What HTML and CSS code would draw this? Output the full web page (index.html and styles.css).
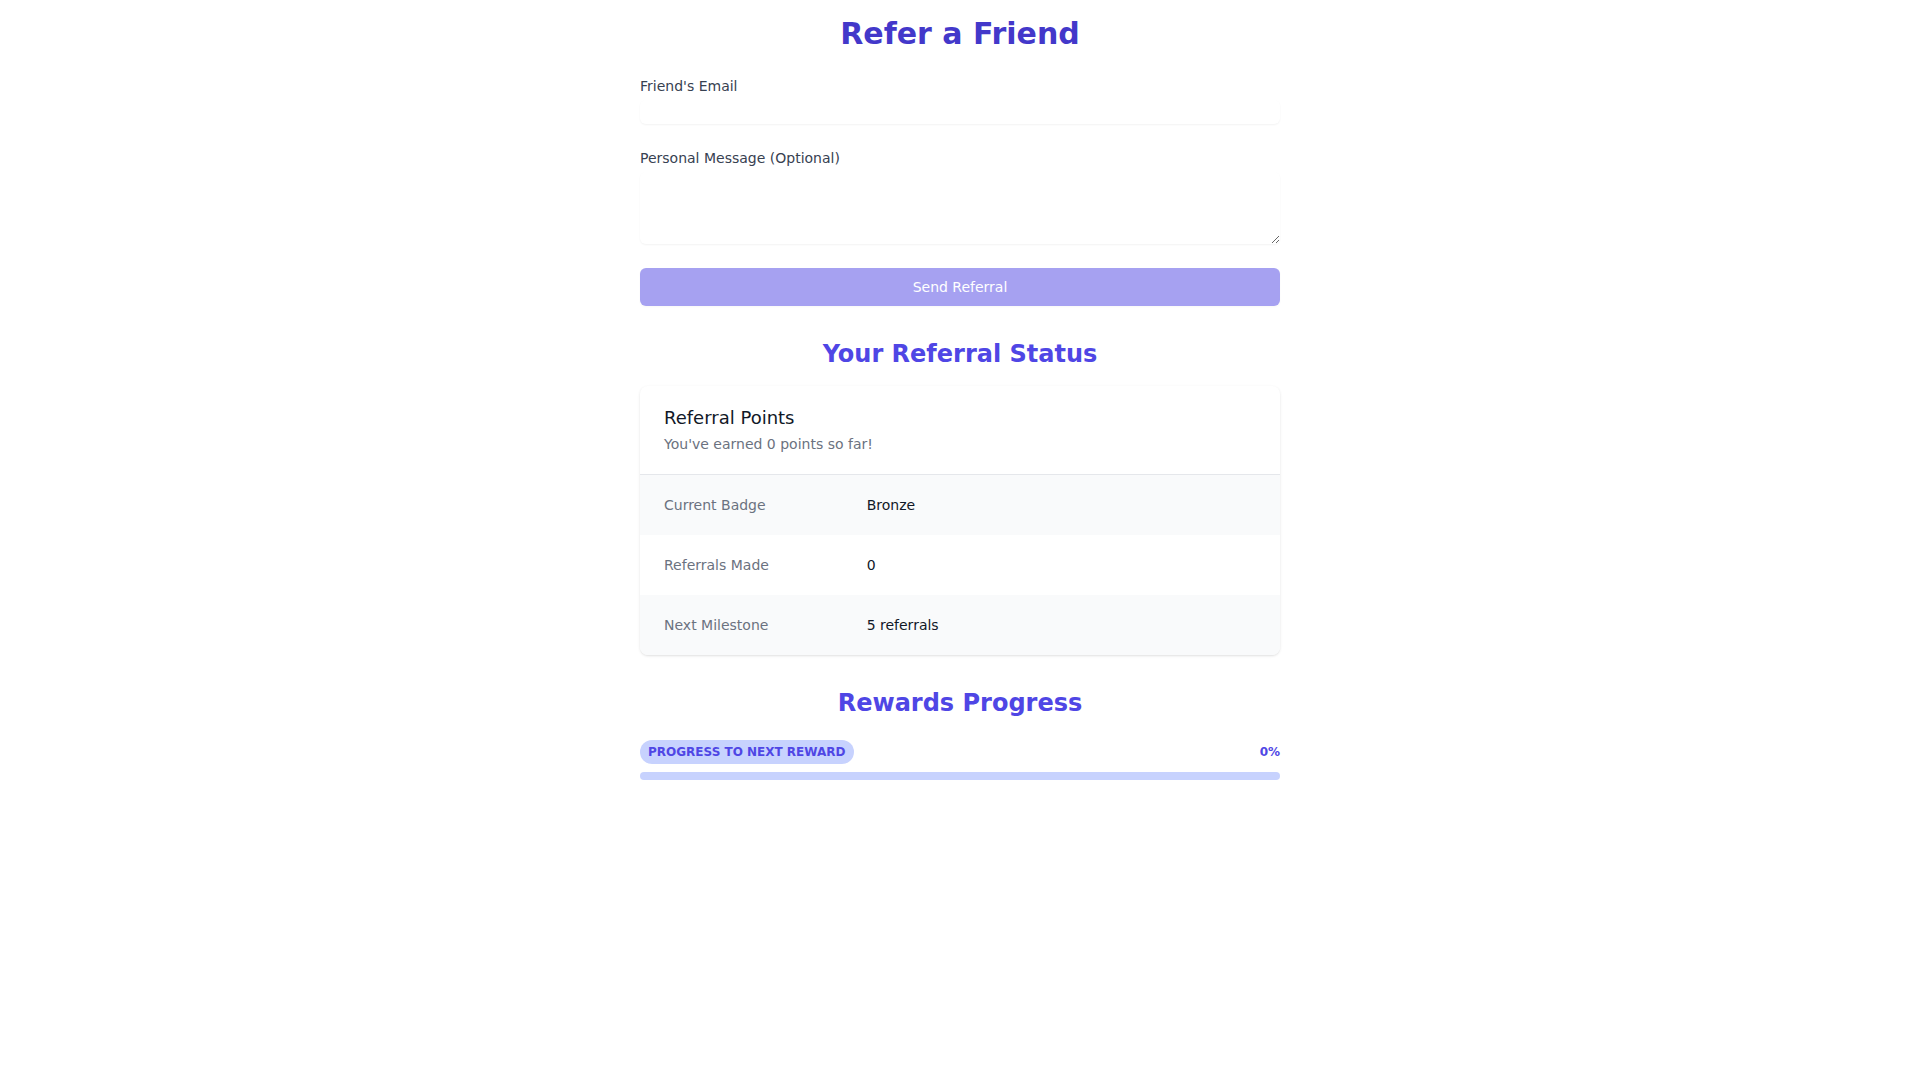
FILE: index.html
```html
<!DOCTYPE html>
<html lang="en">
<head>
<meta charset="utf-8">
<title>Refer a Friend</title>
<link rel="stylesheet" href="styles.css">
</head>
<body>
<div class="page">
  <h1 class="title">Refer a Friend</h1>
  <form class="form">
    <div class="field">
      <label class="label" for="email">Friend's Email</label>
      <input class="input" id="email" type="email">
    </div>
    <div class="field">
      <label class="label" for="msg">Personal Message (Optional)</label>
      <textarea class="textarea" id="msg" rows="3"></textarea>
    </div>
    <button class="button" type="submit" disabled>Send Referral</button>
  </form>

  <h2 class="section-title">Your Referral Status</h2>
  <div class="card">
    <div class="card-header">
      <h3 class="card-title">Referral Points</h3>
      <p class="card-sub">You've earned 0 points so far!</p>
    </div>
    <dl class="list">
      <div class="row row-gray">
        <dt class="row-label">Current Badge</dt>
        <dd class="row-value">Bronze</dd>
      </div>
      <div class="row">
        <dt class="row-label">Referrals Made</dt>
        <dd class="row-value">0</dd>
      </div>
      <div class="row row-gray">
        <dt class="row-label">Next Milestone</dt>
        <dd class="row-value">5 referrals</dd>
      </div>
    </dl>
  </div>

  <h2 class="section-title">Rewards Progress</h2>
  <div class="progress">
    <div class="progress-head">
      <span class="pill">Progress to next reward</span>
      <span class="pct">0%</span>
    </div>
    <div class="bar"><div class="bar-fill" style="width:0%"></div></div>
  </div>
</div>
</body>
</html>
```

FILE: styles.css
```css
* { box-sizing: border-box; }
html, body { margin: 0; padding: 0; background: #ffffff; }
body {
  font-family: "DejaVu Sans", sans-serif;
  font-size: 16px;
  line-height: 1.5;
  color: #111827;
}
.page {
  max-width: 672px;
  margin: 0 auto;
  padding: 16px;
}
.title {
  margin: 0 0 24px;
  text-align: center;
  font-size: 30px;
  line-height: 36px;
  font-weight: 700;
  color: #4338ca;
}
.form {
  display: flex;
  flex-direction: column;
  gap: 24px;
  margin: 0;
}
.field { display: block; }
.label {
  display: block;
  font-size: 14px;
  line-height: 20px;
  color: #374151;
}
.input, .textarea {
  display: block;
  width: 100%;
  margin: 4px 0 0;
  padding: 0;
  border: 0;
  border-radius: 6px;
  box-shadow: 0 1px 2px 0 rgba(0,0,0,0.05);
  font-family: inherit;
  font-size: 16px;
  line-height: 24px;
  background: #fff;
  color: inherit;
}
.input { height: 24px; }
.textarea { height: 72px; resize: vertical; }
.button {
  display: flex;
  justify-content: center;
  width: 100%;
  padding: 8px 16px;
  border: 1px solid transparent;
  border-radius: 6px;
  background: #4f46e5;
  color: #ffffff;
  font-family: inherit;
  font-size: 14px;
  line-height: 20px;
  box-shadow: 0 1px 2px 0 rgba(0,0,0,0.05);
  opacity: 0.5;
}
.section-title {
  margin: 32px 0 16px;
  text-align: center;
  font-size: 24px;
  line-height: 32px;
  font-weight: 700;
  color: #4f46e5;
}
.card {
  background: #fff;
  border-radius: 8px;
  overflow: hidden;
  box-shadow: 0 1px 3px 0 rgba(0,0,0,0.1), 0 1px 2px -1px rgba(0,0,0,0.1);
}
.card-header { padding: 20px 24px; }
.card-title {
  margin: 0;
  font-size: 18px;
  line-height: 24px;
  font-weight: 400;
  color: #111827;
}
.card-sub {
  margin: 4px 0 0;
  font-size: 14px;
  line-height: 20px;
  color: #6b7280;
}
.list {
  margin: 0;
  border-top: 1px solid #e5e7eb;
}
.row {
  display: grid;
  grid-template-columns: repeat(3, 1fr);
  gap: 16px;
  padding: 20px 24px;
  background: #fff;
}
.row-gray { background: #f9fafb; }
.row-label {
  font-size: 14px;
  line-height: 20px;
  color: #6b7280;
}
.row-value {
  margin: 0;
  grid-column: span 2;
  font-size: 14px;
  line-height: 20px;
  color: #111827;
}
.progress { padding-top: 5px; }
.progress-head {
  display: flex;
  align-items: center;
  justify-content: space-between;
  margin-bottom: 8px;
}
.pill {
  display: inline-block;
  padding: 4px 8px;
  border-radius: 9999px;
  background: #c7d2fe;
  color: #4f46e5;
  font-size: 12px;
  line-height: 16px;
  font-weight: 700;
  text-transform: uppercase;
}
.pct {
  display: inline-block;
  color: #4f46e5;
  font-size: 12px;
  line-height: 16px;
  font-weight: 700;
}
.bar {
  display: flex;
  height: 8px;
  margin-bottom: 16px;
  overflow: hidden;
  border-radius: 4px;
  background: #c7d2fe;
}
.bar-fill { background: #6366f1; }
```
